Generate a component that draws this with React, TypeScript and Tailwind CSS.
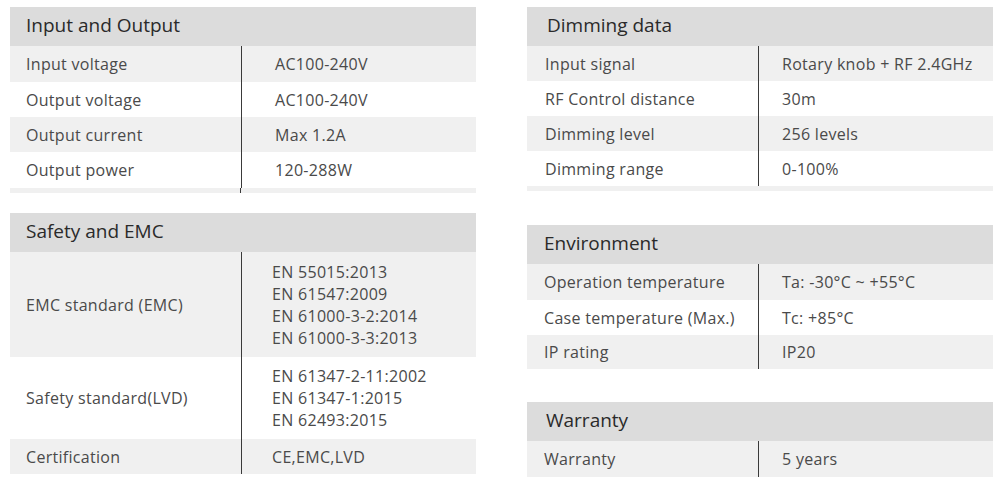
import clsx from 'clsx';

type Row = { label: string; values: string[]; h: number; shade?: boolean };

type SpecTableProps = {
  title: string;
  rows: Row[];
  valuePad: string;
  labelPad: string;
  strip?: boolean;
  stripLine?: boolean;
  titlePad?: string;
};

const SpecTable = ({ title, rows, valuePad, labelPad, strip, stripLine, titlePad }: SpecTableProps) => (
  <div className="w-[466px]">
    <div className={clsx('h-[39px] bg-[#dcdcdc] flex items-center pb-[2px] text-[19px] text-[#2a2a2a]', titlePad ?? labelPad)}>
      {title}
    </div>
    {rows.map((row) => (
      <div
        key={row.label}
        className={clsx('flex text-[16px] text-[#4a4a4a] tracking-[0.3px]', row.shade ? 'bg-[#f0f0f0]' : 'bg-white')}
        style={{ height: row.h }}
      >
        <div className={clsx('w-[231px] shrink-0 flex items-center', labelPad)}>{row.label}</div>
        <div className={clsx('flex-1 border-l border-[#3a3a3a] flex flex-col justify-center', valuePad)}>
          {row.values.map((v) => (
            <div key={v} className="leading-[22px]">{v}</div>
          ))}
        </div>
      </div>
    ))}
    {strip && (
      <div className="h-[5px] bg-[#f0f0f0] flex">
        <div className={clsx('w-[231px] shrink-0', stripLine && 'border-r border-[#3a3a3a]')}></div>
      </div>
    )}
  </div>
);

export default function App() {
  return (
    <div
      className="w-[1000px] h-[483px] bg-white flex gap-[51px] pl-[10px] pt-[7px]"
      style={{ fontFamily: '"Open Sans", "Liberation Sans", sans-serif' }}
    >
      {/* Left column */}
      <div className="flex flex-col gap-[20px]">
        <SpecTable
          title="Input and Output"
          labelPad="pl-[16px]"
          valuePad="pl-[33px]"
          strip
          stripLine
          rows={[
            { label: 'Input voltage', values: ['AC100-240V'], h: 36, shade: true },
            { label: 'Output voltage', values: ['AC100-240V'], h: 35 },
            { label: 'Output current', values: ['Max 1.2A'], h: 35, shade: true },
            { label: 'Output power', values: ['120-288W'], h: 36 },
          ]}
        />
        <SpecTable
          title="Safety and EMC"
          labelPad="pl-[16px]"
          valuePad="pl-[30px]"
          rows={[
            {
              label: 'EMC standard (EMC)',
              values: ['EN 55015:2013', 'EN 61547:2009', 'EN 61000-3-2:2014', 'EN 61000-3-3:2013'],
              h: 105,
              shade: true,
            },
            {
              label: 'Safety standard(LVD)',
              values: ['EN 61347-2-11:2002', 'EN 61347-1:2015', 'EN 62493:2015'],
              h: 82,
            },
            { label: 'Certification', values: ['CE,EMC,LVD'], h: 35, shade: true },
          ]}
        />
      </div>

      {/* Right column */}
      <div className="flex flex-col">
        <SpecTable
          title="Dimming data"
          labelPad="pl-[18px]"
          titlePad="pl-[20px]"
          valuePad="pl-[23px]"
          strip
          rows={[
            { label: 'Input signal', values: ['Rotary knob + RF 2.4GHz'], h: 35, shade: true },
            { label: 'RF Control distance', values: ['30m'], h: 35 },
            { label: 'Dimming level', values: ['256 levels'], h: 35, shade: true },
            { label: 'Dimming range', values: ['0-100%'], h: 35 },
          ]}
        />
        <div className="mt-[34px]">
          <SpecTable
            title="Environment"
            labelPad="pl-[17px]"
            valuePad="pl-[23px]"
            rows={[
              { label: 'Operation temperature', values: ['Ta: -30°C ~ +55°C'], h: 36, shade: true },
              { label: 'Case temperature (Max.)', values: ['Tc: +85°C'], h: 35 },
              { label: 'IP rating', values: ['IP20'], h: 34, shade: true },
            ]}
          />
        </div>
        <div className="mt-[33px]">
          <SpecTable
            title="Warranty"
            labelPad="pl-[17px]"
            titlePad="pl-[19px]"
            valuePad="pl-[23px]"
            rows={[{ label: 'Warranty', values: ['5 years'], h: 36, shade: true }]}
          />
        </div>
      </div>
    </div>
  );
}
